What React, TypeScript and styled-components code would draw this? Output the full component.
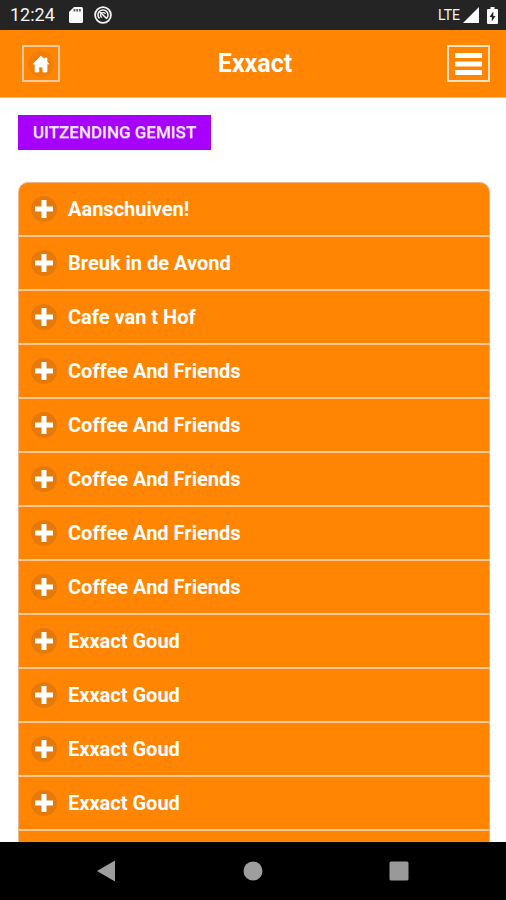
import React, { useState } from "react";
import styled, { createGlobalStyle } from "styled-components";

const ORANGE = "#ff8503";

const GlobalStyle = createGlobalStyle`
  *, *::before, *::after { box-sizing: border-box; }
  body {
    margin: 0;
    background: #fff;
    font-family: Roboto, "Liberation Sans", sans-serif;
  }
`;

const Screen = styled.div`
  display: flex;
  flex-direction: column;
  height: 100vh;
  overflow: hidden;
`;

const StatusBar = styled.div`
  display: flex;
  flex: none;
  align-items: center;
  height: 30px;
  padding: 0 8px 0 10px;
  background: #242424;
  color: #f4f4f4;
`;

const Clock = styled.span`
  margin-right: 14px;
  font-size: 18px;
  line-height: 30px;
`;

const Network = styled.span`
  margin-left: auto;
  font-size: 14px;
  line-height: 30px;
`;

const StatusIcon = styled.svg<{ $gap?: number }>`
  flex: none;
  margin-left: ${({ $gap = 0 }) => $gap}px;
`;

const Header = styled.header`
  display: grid;
  flex: none;
  grid-template-columns: 1fr auto 1fr;
  align-items: center;
  height: 68px;
  padding: 0 16px 0 20px;
  border-bottom: 1px solid #f3bd8b;
  background: ${ORANGE};
`;

const Title = styled.h1`
  margin: 0;
  color: #fff;
  font-size: 25px;
  line-height: 34px;
  font-weight: 700;
`;

const HeaderButton = styled.button<{ $wide?: boolean }>`
  display: flex;
  align-items: center;
  justify-content: center;
  justify-self: ${({ $wide }) => ($wide ? "end" : "start")};
  width: ${({ $wide }) => ($wide ? 43 : 38)}px;
  height: 37px;
  margin-left: 2px;
  padding: 0;
  border: 2px solid ${({ $wide }) => ($wide ? "#ffe3c4" : "#fbc8a0")};
  background: transparent;
  cursor: pointer;
`;

const Content = styled.main`
  flex: 1;
  min-height: 0;
  overflow-y: auto;
  scrollbar-width: none;
  padding: 17px 16px 0 18px;
`;

const Tag = styled.h2`
  width: fit-content;
  margin: 0 0 32px;
  padding: 0 15px;
  background: #a800ff;
  color: #f8e9ff;
  font-size: 17px;
  line-height: 35px;
  font-weight: 500;
  text-shadow: 0 1px 0 rgba(248, 233, 255, 0.4);
`;

const ProgramList = styled.ul`
  margin: 0;
  padding: 0;
  overflow: hidden;
  border: 1px solid #eeb68e;
  border-radius: 10px 10px 0 0;
  background: ${ORANGE};
  list-style: none;
`;

const ProgramItem = styled.li`
  border-bottom: 2px solid #ffc898;
`;

const ProgramButton = styled.button`
  display: flex;
  align-items: center;
  gap: 11px;
  width: 100%;
  height: 52px;
  padding: 0 12px;
  border: 0;
  background: transparent;
  color: #fff;
  font: 700 20px/24px Roboto, "Liberation Sans", sans-serif;
  text-align: left;
  cursor: pointer;
`;

const NavBar = styled.nav`
  display: flex;
  flex: none;
  align-items: center;
  justify-content: center;
  gap: 126px;
  height: 58px;
  background: #000;
`;

const NavButton = styled.button`
  display: flex;
  padding: 0;
  border: 0;
  background: transparent;
  cursor: pointer;
`;

const programs = [
  "Aanschuiven!",
  "Breuk in de Avond",
  "Cafe van t Hof",
  "Coffee And Friends",
  "Coffee And Friends",
  "Coffee And Friends",
  "Coffee And Friends",
  "Coffee And Friends",
  "Exxact Goud",
  "Exxact Goud",
  "Exxact Goud",
  "Exxact Goud",
  "Exxact Goud",
];

function ToggleIcon({ open }: { open: boolean }) {
  return (
    <svg width="26" height="26" viewBox="0 0 26 26" aria-hidden="true">
      <circle cx="13" cy="13" r="13" fill="#e57a0b" />
      <path d={open ? "M4 10.5h18v5H4z" : "M10.5 4h5v6.5H22v5h-6.5V22h-5v-6.5H4v-5h6.5z"} fill="#fff" />
    </svg>
  );
}

function ProgramRow({ name }: { name: string }) {
  const [open, setOpen] = useState(false);
  return (
    <ProgramItem>
      <ProgramButton type="button" aria-expanded={open} onClick={() => setOpen(!open)}>
        <ToggleIcon open={open} />
        {name}
      </ProgramButton>
    </ProgramItem>
  );
}

export default function App() {
  return (
    <Screen>
      <GlobalStyle />
      <StatusBar>
        <Clock>12:24</Clock>
        <StatusIcon width="14" height="16" viewBox="0 0 14 16" aria-hidden="true">
          <path d="M5 0h7.5Q14 0 14 1.5v13q0 1.500-1.500 1.500h-11Q0 16 0 14.500V5z" fill="#fafafa" />
          <path d="M5.500 2v2.500M8.200 2v2.500M10.900 2v2.500" stroke="#555" strokeWidth="1.700" />
        </StatusIcon>
        <StatusIcon $gap={11} width="18" height="18" viewBox="0 0 18 18" fill="none" stroke="#f4f4f4" aria-hidden="true">
          <circle cx="9" cy="9" r="7.900" strokeWidth="1.800" />
          <path d="M5.500 12.500A5 5 0 1 1 12.500 12.500M5.800 5.800l7 7" strokeWidth="1.600" />
          <path d="M8 11.500a2.600 2.600 0 1 1 3.500-3.500" strokeWidth="1.400" />
        </StatusIcon>
        <Network>LTE</Network>
        <StatusIcon $gap={3} width="16" height="16" viewBox="0 0 16 16" aria-hidden="true">
          <path d="M16 0v16H0z" fill="#fff" />
        </StatusIcon>
        <StatusIcon $gap={8} width="11" height="17" viewBox="0 0 11 17" aria-hidden="true">
          <path d="M3.500 0h4v2H10q1 0 1 1v13q0 1-1 1H1q-1 0-1-1V3q0-1 1-1h2.500z" fill="#fff" />
          <path d="M6.300 4.500L2.500 10h2.300v4.500L8.500 9H6.300z" fill="#242424" />
        </StatusIcon>
      </StatusBar>

      <Header>
        <HeaderButton type="button" aria-label="Home">
          <svg width="26" height="26" viewBox="0 0 26 26" aria-hidden="true">
            <circle cx="13" cy="13" r="13" fill="#f07e08" />
            <path
              d="M13 5L5 13h2v8h3.800v-5h4v5H19v-8h2l-2-2V7h-2.300v1.700z"
              fill="#fff"
              stroke="#fff"
              strokeWidth="0.700"
              strokeLinejoin="round"
            />
          </svg>
        </HeaderButton>
        <Title>Exxact</Title>
        <HeaderButton $wide type="button" aria-label="Menu">
          <svg width="27" height="22" viewBox="0 0 27 22" aria-hidden="true">
            <path d="M0 0h27v5H0zM0 8.500h27v5H0zM0 17h27v5H0z" fill="#fff" />
          </svg>
        </HeaderButton>
      </Header>

      <Content>
        <Tag>UITZENDING GEMIST</Tag>
        <ProgramList>
          {programs.map((name, index) => (
            <ProgramRow key={index} name={name} />
          ))}
        </ProgramList>
      </Content>

      <NavBar aria-label="System">
        <NavButton type="button" aria-label="Back">
          <svg width="20" height="22" viewBox="0 0 20 22" aria-hidden="true">
            <path d="M18 0.500v21L0 11z" fill="#9e9e9e" />
          </svg>
        </NavButton>
        <NavButton type="button" aria-label="Home screen">
          <svg width="20" height="20" viewBox="0 0 20 20" aria-hidden="true">
            <circle cx="10" cy="10" r="9.500" fill="#9e9e9e" />
          </svg>
        </NavButton>
        <NavButton type="button" aria-label="Recent apps">
          <svg width="20" height="20" viewBox="0 0 20 20" aria-hidden="true">
            <rect x="0.500" y="0.500" width="19" height="19" rx="1.500" fill="#999" />
          </svg>
        </NavButton>
      </NavBar>
    </Screen>
  );
}
